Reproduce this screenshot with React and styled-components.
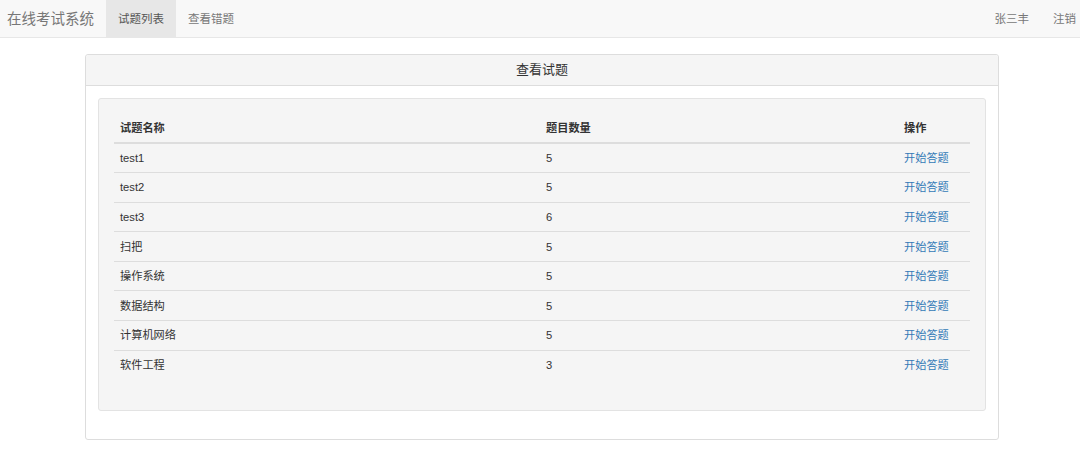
import React from "react";
import styled, { createGlobalStyle } from "styled-components";

const GlobalStyle = createGlobalStyle`
  html, body {
    margin: 0;
    padding: 0;
    background: #fff;
  }
  body {
    font-family: "Liberation Sans", "Noto Sans CJK SC", sans-serif;
    font-size: 11.2px;
    line-height: 16px;
    color: #333;
  }
  * { box-sizing: border-box; }
`;

const Navbar = styled.nav`
  display: flex;
  align-items: stretch;
  height: 38px;
  background: #f8f8f8;
  border-bottom: 1px solid #e7e7e7;
`;

const Brand = styled.a`
  display: flex;
  align-items: center;
  padding: 0 12px 0 7px;
  font-size: 14.5px;
  color: #777;
  text-decoration: none;
`;

const NavList = styled.ul`
  display: flex;
  margin: 0;
  padding: 0;
  list-style: none;
  margin-left: ${(p) => (p.$right ? "auto" : "0")};
`;

const NavItem = styled.li`
  display: flex;
  align-items: center;
  padding: 0 ${(p) => p.$pr || "12px"} 0 12px;
  font-size: 11.5px;
  background: ${(p) => (p.$active ? "#e7e7e7" : "transparent")};
  color: ${(p) => (p.$active ? "#555" : "#777")};
`;

const Container = styled.div`
  width: 914px;
  margin: 16px 0 0 85px;
`;

const Panel = styled.div`
  border: 1px solid #ddd;
  border-radius: 3px;
  background: #fff;
`;

const PanelHeading = styled.div`
  height: 31px;
  display: flex;
  align-items: center;
  justify-content: center;
  background: #f5f5f5;
  border-bottom: 1px solid #ddd;
  border-radius: 3px 3px 0 0;
  font-size: 13px;
  color: #333;
`;

const PanelBody = styled.div`
  padding: 12px 12px 28px;
`;

const Well = styled.div`
  background: #f5f5f5;
  border: 1px solid #e3e3e3;
  border-radius: 3px;
  padding: 15px 15px 30px;
`;

const Table = styled.table`
  width: 100%;
  border-collapse: collapse;
  border-spacing: 0;
`;

const Th = styled.th`
  text-align: left;
  font-weight: bold;
  padding: 6px 6px;
  height: 28px;
  border-bottom: 2px solid #ddd;
  width: ${(p) => p.$w || "auto"};
`;

const Td = styled.td`
  padding: 6px 6px;
  height: 29.6px;
  border-top: 1px solid #ddd;
  vertical-align: middle;
`;

const Link = styled.a`
  color: #337ab7;
  text-decoration: none;
`;

const rows = [
  ["test1", 5],
  ["test2", 5],
  ["test3", 6],
  ["扫把", 5],
  ["操作系统", 5],
  ["数据结构", 5],
  ["计算机网络", 5],
  ["软件工程", 3],
];

export default function App() {
  return (
    <>
      <GlobalStyle />
      <Navbar>
        <Brand href="#">在线考试系统</Brand>
        <NavList>
          <NavItem $active>试题列表</NavItem>
          <NavItem>查看错题</NavItem>
        </NavList>
        <NavList $right>
          <NavItem>张三丰</NavItem>
          <NavItem $pr="4px">注销</NavItem>
        </NavList>
      </Navbar>
      <Container>
        <Panel>
          <PanelHeading>查看试题</PanelHeading>
          <PanelBody>
            <Well>
              <Table>
                <thead>
                  <tr>
                    <Th $w="426px">试题名称</Th>
                    <Th $w="358px">题目数量</Th>
                    <Th>操作</Th>
                  </tr>
                </thead>
                <tbody>
                  {rows.map(([name, count]) => (
                    <tr key={name}>
                      <Td>{name}</Td>
                      <Td>{count}</Td>
                      <Td>
                        <Link href="#">开始答题</Link>
                      </Td>
                    </tr>
                  ))}
                </tbody>
              </Table>
            </Well>
          </PanelBody>
        </Panel>
      </Container>
    </>
  );
}
